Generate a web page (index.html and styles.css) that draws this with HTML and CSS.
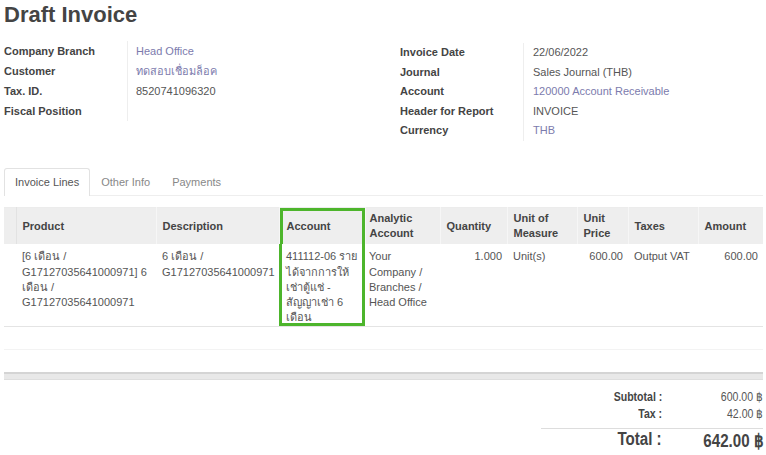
FILE: index.html
```html
<!DOCTYPE html>
<html>
<head>
<meta charset="utf-8">
<title>Draft Invoice</title>
<link rel="stylesheet" href="styles.css">
</head>
<body>
<div class="sheet">
  <h1 class="title">Draft Invoice</h1>
  <div class="form">
    <div class="group group-left">
      <div class="lbl">Company Branch</div><div class="val link">Head Office</div>
      <div class="lbl">Customer</div><div class="val link">ทดสอบเชื่อมล็อค</div>
      <div class="lbl">Tax. ID.</div><div class="val">8520741096320</div>
      <div class="lbl">Fiscal Position</div><div class="val"></div>
    </div>
    <div class="group group-right">
      <div class="lbl">Invoice Date</div><div class="val">22/06/2022</div>
      <div class="lbl">Journal</div><div class="val">Sales Journal (THB)</div>
      <div class="lbl">Account</div><div class="val link">120000 Account Receivable</div>
      <div class="lbl">Header for Report</div><div class="val">INVOICE</div>
      <div class="lbl">Currency</div><div class="val link">THB</div>
    </div>
  </div>

  <div class="tabs">
    <div class="tab active">Invoice Lines</div>
    <div class="tab">Other Info</div>
    <div class="tab">Payments</div>
  </div>

  <table class="lines">
    <colgroup>
      <col class="c-handle"><col class="c-product"><col class="c-desc"><col class="c-account"><col class="c-analytic">
      <col class="c-qty"><col class="c-uom"><col class="c-price"><col class="c-taxes"><col class="c-amount">
    </colgroup>
    <thead>
      <tr>
        <th class="handle"></th>
        <th>Product</th>
        <th>Description</th>
        <th class="hl-top">Account</th>
        <th class="after-hl">Analytic Account</th>
        <th>Quantity</th>
        <th>Unit of Measure</th>
        <th>Unit Price</th>
        <th>Taxes</th>
        <th>Amount</th>
      </tr>
    </thead>
    <tbody>
      <tr class="main">
        <td></td>
        <td>[6 เดือน / G17127035641000971] 6 เดือน / G17127035641000971</td>
        <td>6 เดือน / G17127035641000971</td>
        <td class="hl-bottom">411112-06 รายได้จากการให้เช่าตู้แช่ - สัญญาเช่า 6 เดือน</td>
        <td class="after-hl">Your Company / Branches / Head Office</td>
        <td class="num">1.000</td>
        <td>Unit(s)</td>
        <td class="num">600.00</td>
        <td>Output VAT</td>
        <td class="num">600.00</td>
      </tr>
      <tr class="empty"><td colspan="10"></td></tr>
    </tbody>
  </table>
  <div class="table-foot"></div>

  <div class="totals">
    <div class="t-lbl"><span class="sq">Subtotal :</span></div><div class="t-val"><span class="sq">600.00 ฿</span></div>
    <div class="t-lbl"><span class="sq">Tax :</span></div><div class="t-val"><span class="sq">42.00 ฿</span></div>
    <div class="t-lbl t-total"><span class="sq">Total :</span></div><div class="t-val t-total"><span class="sq">642.00 ฿</span></div>
  </div>
</div>
</body>
</html>
```

FILE: styles.css
```css
* { box-sizing: border-box; }

body {
  margin: 0;
  background: #fff;
  font-family: "Liberation Sans", Arial, sans-serif;
  font-size: 11px;
  color: #4c4c4c;
}

.sheet {
  padding: 0 3px 0 4px;
}

.title {
  margin: 0;
  padding-top: 2px;
  font-size: 22px;
  line-height: 26px;
  font-weight: bold;
  color: #444;
}

.form {
  display: flex;
  margin-top: 13px;
}

.group {
  display: grid;
  grid-template-columns: 124px 1fr;
  align-content: start;
}

.group-left { width: 396px; }
.group-right { flex: 1; padding-top: 2px; }

.lbl {
  font-weight: bold;
  color: #444;
  line-height: 20px;
  border-right: 1px solid #eeeeee;
}

.val {
  padding-left: 8px;
  line-height: 20px;
  color: #555;
}

.group-right .lbl,
.group-right .val { line-height: 19.6px; }

.group-right .val { padding-left: 9px; }

.link { color: #7c7bad; }

/* Tabs */
.tabs {
  display: flex;
  margin-top: 27px;
  height: 28px;
  border-bottom: 1px solid #eeeeee;
}

.tab {
  padding: 0 10px;
  line-height: 26px;
  height: 28px;
  border: 1px solid transparent;
  border-bottom: none;
  color: #888;
}

.tab.active {
  border-color: #e2e2e2;
  background: #fff;
  color: #555;
  border-radius: 3px 3px 0 0;
}

/* Table */
.lines {
  width: 759px;
  border-collapse: collapse;
  table-layout: fixed;
  margin-top: 11px;
  border-top: 1px solid #ececec;
}

.c-handle { width: 12px; }
.c-product { width: 140px; }
.c-desc { width: 123px; }
.c-account { width: 86px; }
.c-analytic { width: 75px; }
.c-qty { width: 67px; }
.c-uom { width: 70px; }
.c-price { width: 51px; }
.c-taxes { width: 70px; }
.c-amount { width: 65px; }

.lines th {
  background: #eeeeee;
  font-weight: bold;
  color: #444;
  text-align: left;
  vertical-align: middle;
  height: 37px;
  padding: 0 3px 0 6px;
  line-height: 15px;
  border-left: 1px solid #f6f6f6;
}

.lines th.handle {
  border-left: none;
  border-right: 1px solid #e2e2e2;
  padding: 0;
}

.lines td {
  vertical-align: top;
  padding: 5px 3px 1px 6px;
  line-height: 15.2px;
  color: #555;
}

.lines th.hl-top,
.lines td.hl-bottom { padding-left: 7px; }

.lines th.after-hl,
.lines td.after-hl { padding-left: 4px; }

.lines tr.main td { border-bottom: 1px solid #e4e4e4; }

.lines td.num {
  text-align: right;
  padding-right: 5px;
}

.lines tr.empty td {
  height: 23px;
  padding: 0;
  border-bottom: 1px solid #f3f3f3;
}

.lines th.hl-top {
  box-shadow: inset 3px 3px 0 #4db52c, inset -3px 0 0 #4db52c;
}

.lines td.hl-bottom {
  box-shadow: inset 3px -3px 0 #4db52c, inset -3px 0 0 #4db52c;
}

.table-foot {
  margin-top: 22px;
  height: 8px;
  border-top: 2px solid #d4d4d4;
  border-bottom: 1px solid #dedede;
  background: #e8e8e8;
}

/* Totals */
.totals {
  display: grid;
  grid-template-columns: 121px 101px;
  width: 222px;
  margin-left: auto;
  margin-top: 9px;
}

.sq {
  display: inline-block;
  transform: scaleX(0.88);
  transform-origin: right center;
}

.t-lbl {
  text-align: right;
  font-weight: bold;
  color: #444;
  font-size: 12px;
  line-height: 17px;
}

.t-val {
  text-align: right;
  color: #555;
  font-size: 12px;
  line-height: 17px;
}

.t-total {
  margin-top: 5px;
  border-top: 1px solid #dddddd;
  padding-top: 0;
  font-weight: bold;
  color: #444;
  font-size: 18px;
  line-height: 20px;
}

.t-total .sq { transform: scaleX(0.84); }

.t-val.t-total {
  padding-top: 2px;
}
```
